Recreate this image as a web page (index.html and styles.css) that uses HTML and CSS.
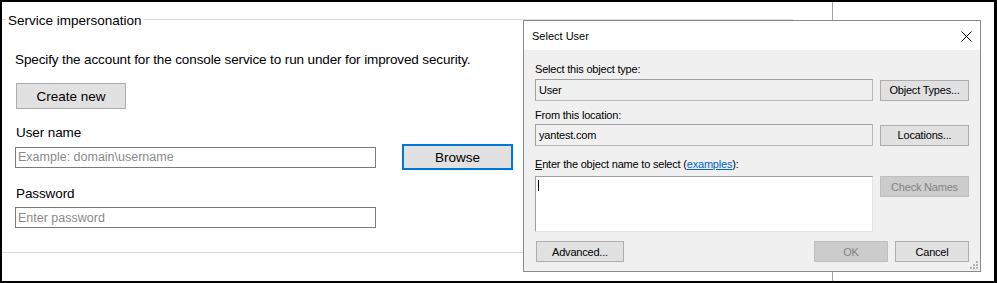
FILE: index.html
```html
<!DOCTYPE html>
<html lang="en">
<head>
    <meta charset="UTF-8">
    <meta name="viewport" content="width=device-width, initial-scale=1.0">
    <title>Service impersonation</title>
    <link rel="stylesheet" href="styles.css">
</head>
<body>
    <div class="frame">
        <div class="main">
            <fieldset class="group">
                <legend>Service impersonation</legend>
                <div class="group-body">
                    <p class="hint">Specify the account for the console service to run under for improved security.</p>
                    <button class="btn btn-create">Create new</button>
                    <label class="field-label" for="userName">User name</label>
                    <div class="field-row">
                        <input type="text" id="userName" class="field" placeholder="Example: domain\username">
                        <button class="btn btn-browse">Browse</button>
                    </div>
                    <label class="field-label" for="password">Password</label>
                    <input type="password" id="password" class="field" placeholder="Enter password">
                </div>
            </fieldset>
        </div>
        <div class="side"></div>

        <!-- Select User dialog, floating over the page -->
        <div class="dialog">
            <div class="dialog-title">
                <span>Select User</span>
                <svg class="close" width="11" height="11" viewBox="0 0 11 11">
                    <path d="M0.5 0.5 L10.5 10.5 M10.5 0.5 L0.5 10.5" stroke="#000" stroke-width="1" fill="none"/>
                </svg>
            </div>
            <div class="dialog-body">
                <div class="dlg-label">Select this object type:</div>
                <div class="dlg-row">
                    <div class="dlg-box">User</div>
                    <button class="dbtn">Object Types...</button>
                </div>
                <div class="dlg-label dlg-label-2">From this location:</div>
                <div class="dlg-row dlg-row-2">
                    <div class="dlg-box">yantest.com</div>
                    <button class="dbtn">Locations...</button>
                </div>
                <div class="dlg-label dlg-label-3"><u>E</u>nter the object name to select (<a href="#">examples</a>):</div>
                <div class="dlg-row dlg-row-3">
                    <div class="dlg-area"><span class="caret"></span></div>
                    <button class="dbtn" disabled>Check Names</button>
                </div>
                <div class="dlg-actions">
                    <button class="dbtn btn-advanced">Advanced...</button>
                    <span class="spacer"></span>
                    <button class="dbtn dbtn-sm" disabled>OK</button>
                    <button class="dbtn dbtn-sm">Cancel</button>
                </div>
            </div>
            <svg class="grip" width="8" height="8" viewBox="0 0 8 8">
                <g fill="#b4b4b4">
                    <rect x="6" y="0" width="2" height="2"/>
                    <rect x="3" y="3" width="2" height="2"/>
                    <rect x="6" y="3" width="2" height="2"/>
                    <rect x="0" y="6" width="2" height="2"/>
                    <rect x="3" y="6" width="2" height="2"/>
                    <rect x="6" y="6" width="2" height="2"/>
                </g>
            </svg>
        </div>
    </div>
</body>
</html>
```

FILE: styles.css
```css
* { margin: 0; padding: 0; box-sizing: border-box; }
body {
    font-family: "Liberation Sans", Arial, sans-serif;
    background: #000;
    color: #000;
    padding: 2px 3px 2px 2px;
    height: 283px;
    overflow: hidden;
}
.frame {
    position: relative;
    display: flex;
    height: 279px;
    background: #fff;
    overflow: hidden;
}
.main {
    flex: none;
    width: 831px;
    border-right: 1px solid #a0a0a0;
}
.side {
    flex: 1;
}
.group {
    width: 791px;
    margin-top: 7px;
    border: none;
    border-top: 1px solid #dcdcdc;
    border-bottom: 1px solid #dcdcdc;
    min-inline-size: 0;
}
.group legend {
    margin-left: 4px;
    padding: 4px 2px 0;
    font-size: 13.5px;
    line-height: 16px;
}
.group-body {
    padding: 0 0 24px 13px;
    display: flex;
    flex-direction: column;
    align-items: flex-start;
}
.hint {
    margin-top: 23px;
    font-size: 13.5px;
    line-height: 16px;
    letter-spacing: -0.12px;
}
.btn {
    font-family: inherit;
    font-size: 13.5px;
    color: #000;
    background: #e1e1e1;
    border: 1px solid #adadad;
    cursor: pointer;
}
.btn-create {
    margin: 15px 0 0 1px;
    width: 110px;
    height: 26px;
}
.field-label {
    margin: 16px 0 0 1px;
    font-size: 13.5px;
    line-height: 16px;
    letter-spacing: -0.1px;
}
.field-row {
    margin-top: 3px;
    display: flex;
    align-items: center;
    height: 26px;
}
.field {
    width: 361px;
    height: 21px;
    padding: 0 2px;
    border: 1px solid #7a7a7a;
    font-family: inherit;
    font-size: 12.5px;
    color: #000;
    outline: none;
}
.field::placeholder {
    color: #8a8a8a;
}
.btn-browse {
    margin-left: 26px;
    width: 111px;
    height: 26px;
    border: 2px solid #0078d7;
}
#password {
    margin-top: 5px;
}

/* dialog */
.dialog {
    position: absolute;
    left: 521px;
    top: 18px;
    width: 458px;
    height: 252px;
    border: 1px solid #8a8a8a;
    background: #f0f0f0;
    font-size: 11px;
    letter-spacing: -0.2px;
}
.dialog-title {
    height: 29px;
    padding: 0 8px 0 8px;
    display: flex;
    align-items: center;
    justify-content: space-between;
    background: #fff;
    font-size: 11px;
    letter-spacing: 0;
}
.dialog-title .close {
    margin-top: 1px;
}
.dialog-body {
    padding: 13px 11px 0;
}
.dlg-label {
    line-height: 13px;
    white-space: nowrap;
}
.dlg-label a {
    color: #0066cc;
}
.dlg-label-2 { margin-top: 8px; }
.dlg-label-3 { margin-top: 12px; }
.dlg-row {
    margin-top: 3px;
    display: flex;
    align-items: center;
    gap: 7px;
}
.dlg-row-2 { margin-top: 2px; }
.dlg-row-3 {
    margin-top: 5px;
    align-items: flex-start;
}
.dlg-box {
    width: 338px;
    height: 22px;
    padding: 0 3px;
    line-height: 20px;
    border: 1px solid #a0a0a0;
    border-right-color: #b9b9b9;
    border-bottom-color: #b9b9b9;
}
.dlg-area {
    position: relative;
    width: 338px;
    height: 56px;
    background: #fff;
    border: 1px solid #a0a0a0;
    border-right-color: #e3e3e3;
    border-bottom-color: #e3e3e3;
}
.caret {
    position: absolute;
    left: 2px;
    top: 3px;
    width: 1px;
    height: 11px;
    background: #000;
}
.dbtn {
    width: 89px;
    height: 21px;
    font-family: inherit;
    font-size: 11px;
    letter-spacing: -0.2px;
    color: #000;
    background: #e1e1e1;
    border: 1px solid #adadad;
}
.dbtn:disabled {
    color: #838383;
    background: #cccccc;
    border-color: #bfbfbf;
}
.dlg-actions {
    margin-top: 9px;
    display: flex;
    gap: 7px;
}
.btn-advanced {
    margin-left: 1px;
    width: 88px;
}
.spacer {
    flex: 1;
}
.dbtn-sm {
    width: 74px;
}
.grip {
    position: absolute;
    right: 2px;
    bottom: 2px;
}
```
